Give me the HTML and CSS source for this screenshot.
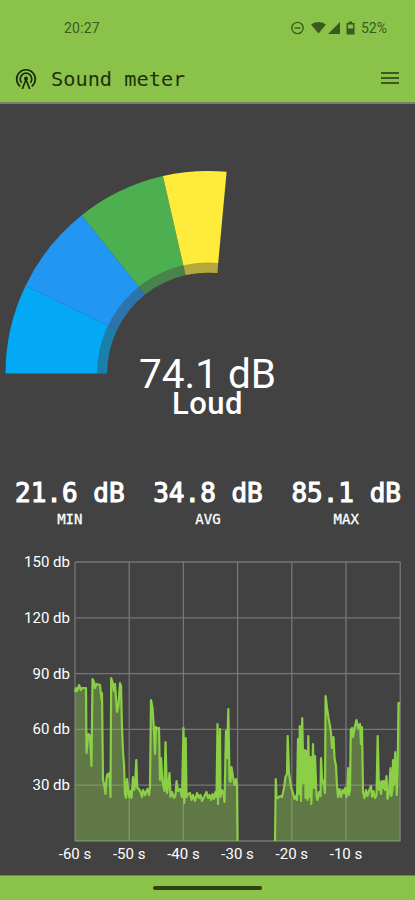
FILE: index.html
```html
<!DOCTYPE html>
<html lang="en">
<head>
  <meta charset="utf-8">
  <title>Sound meter</title>
  <link rel="stylesheet" href="styles.css">
</head>
<body>
  <header>
    <div class="status">
      <span class="time">20:27</span>
      <div class="status-icons">
        <svg width="70" height="16" viewBox="0 0 70 16">
          <circle cx="7.5" cy="8" r="5.7" fill="none" stroke="#3c5a1d" stroke-width="1.3"/>
          <path d="M4.5 8h6" stroke="#3c5a1d" stroke-width="1.4"/>
          <path d="M21 4.400Q28.500-.500 36 4.400L28.500 13.500Z"/>
          <path d="M50 2v12H38Z"/>
          <path d="M58.800 1.500h3.400v1.500h2.300V14.500h-8V3h2.300Z"/>
          <path d="M58 4.600h5V8.500h-5z" fill="#8bc34a"/>
        </svg>
        <span>52%</span>
      </div>
    </div>
    <div class="toolbar">
      <svg class="logo" width="22" height="22" viewBox="0 0 22 22">
        <path d="M5.200 18.300A9.300 9.300 0 1 1 16.800 18.300"/>
        <path d="M6.600 14.800A5.800 5.800 0 1 1 15.400 14.800"/>
        <circle class="dot" cx="11" cy="10.500" r="2"/>
        <path d="M7.300 21L11 11.500L14.700 21"/>
      </svg>
      <h1>Sound meter</h1>
      <svg class="menu" width="18" height="14" viewBox="0 0 18 14">
        <path d="M0 2h18M0 7h18M0 12h18"/>
      </svg>
    </div>
  </header>

  <main>
    <section class="gauge">
      <svg id="gauge" width="415" height="220" viewBox="0 160 415 220"></svg>
      <div class="reading">
        <div class="value">74.1 dB</div>
        <div class="level">Loud</div>
      </div>
    </section>

    <section class="stats">
      <div class="stat"><b>21.6 dB</b><span>MIN</span></div>
      <div class="stat"><b>34.8 dB</b><span>AVG</span></div>
      <div class="stat"><b>85.1 dB</b><span>MAX</span></div>
    </section>

    <svg class="chart" id="chart" width="415" height="325" viewBox="0 550 415 325"></svg>
  </main>

  <footer><div class="pill"></div></footer>

  <script src="script.js"></script>
</body>
</html>
```
FILE: styles.css
```css
body {
  margin: 0;
  height: 900px;
  display: flex;
  flex-direction: column;
  background: #424242;
  color: #fff;
  font-family: Roboto, sans-serif;
  overflow: hidden;
}

header {
  box-sizing: border-box;
  height: 104px;
  background: #8bc34a;
  border-bottom: 2px solid #77806c;
}

.status {
  height: 55px;
  display: flex;
  align-items: center;
  justify-content: space-between;
  padding: 0 28px 0 64px;
  box-sizing: border-box;
  font-size: 14px;
  color: #3c5a1d;
}

.time {
  letter-spacing: 0.2px;
}

.status-icons {
  display: flex;
  align-items: center;
  gap: 1px;
  fill: #3c5a1d;
}

.toolbar {
  height: 47px;
  display: flex;
  align-items: center;
  padding: 0 15px;
}

.logo {
  fill: none;
  stroke: #1b290c;
  stroke-width: 1.7;
}

.logo .dot {
  fill: #1b290c;
  stroke: none;
}

h1 {
  flex: 1;
  margin: 0 0 0 14px;
  font: 400 20.300px "DejaVu Sans Mono", monospace;
  color: #1f300e;
}

.menu {
  margin: 0 1px 2px 0;
  stroke: #3c5a1d;
  stroke-width: 2;
}

main {
  height: 771px;
}

.gauge {
  height: 376px;
  padding-top: 56px;
  box-sizing: border-box;
}

.gauge svg {
  display: block;
}

.reading {
  margin-top: -30px;
  text-align: center;
}

.value {
  font-size: 40.500px;
  line-height: 48px;
}

.level {
  margin-top: -12px;
  font-size: 31px;
  font-weight: 500;
  line-height: 36px;
  letter-spacing: 0.5px;
}

.stats {
  height: 70px;
  display: flex;
  justify-content: space-between;
  padding: 0 14px 0 15px;
}

.stat {
  display: flex;
  flex-direction: column;
  align-items: center;
  font-family: "DejaVu Sans Mono", monospace;
}

.stat b {
  font-size: 26px;
  font-weight: 400;
  line-height: 26px;
  -webkit-text-stroke: 1.100px #fff;
}

.stat span {
  margin-top: 4px;
  font-size: 14px;
  line-height: 18px;
  -webkit-text-stroke: 0.300px #fff;
}

.chart {
  display: block;
}

.chart text {
  font-size: 15px;
  fill: #fff;
}

.grid {
  fill: none;
  stroke: #777;
  stroke-width: 1.3;
}

.area {
  fill: #8bc34a;
  fill-opacity: 0.42;
}

.line {
  fill: none;
  stroke: #8bcf46;
  stroke-width: 2.2;
  stroke-linejoin: round;
}

footer {
  box-sizing: border-box;
  height: 25px;
  background: #8bc34a;
  border-top: 1px solid #77806c;
  padding-top: 10px;
}

.pill {
  width: 109px;
  height: 4px;
  margin: 0 auto;
  border-radius: 2px;
  background: #2a4010;
}
```
FILE: script.js
```js
// Gauge: seven bands of 20 dB over half a circle
const bands = ['#03a9f4', '#2196f3', '#4caf50', '#ffeb3b'];
const level = 74.1;
const cx = 208, cy = 373.5;

function point(r, db) {
  const a = Math.PI * db / 140;
  return (cx - r * Math.cos(a)).toFixed(2) + ' ' + (cy - r * Math.sin(a)).toFixed(2);
}

function ring(r1, r2, from, to, color) {
  return `<path fill="${color}" d="M${point(r2, from)}A${r2} ${r2} 0 0 1 ${point(r2, to)}L${point(r1, to)}A${r1} ${r1} 0 0 0 ${point(r1, from)}Z"/>`;
}

let gauge = '';
bands.forEach((color, i) => {
  gauge += ring(101, 202.5, i * 20, Math.min(level, i * 20 + 20), color);
});
gauge += ring(101, 111, 0, level, 'rgba(66,66,66,0.4)');
document.getElementById('gauge').innerHTML = gauge;

const before = [
  75,692, 76,688, 77,691, 78,689, 79,685, 81,690, 82,688, 86,688,
  86.5,753, 87.5,742, 88.5,734, 90,736, 91.5,766, 92.5,679, 94,682, 95,688,
  96.5,684, 100,685, 101.5,700, 102,693, 103,780, 104,784, 105.5,794, 106.5,778,
  107.5,774, 108.5,776, 109.5,773, 110.5,797, 111.2,678, 113,684, 114,691, 115,684,
  117,712, 118.5,705, 120,683, 121,686, 122,728, 123,752, 124,765, 125,794,
  126,798, 127,779, 128,788, 129,797, 130.5,791, 131.5,798, 133,777, 134,790,
  135,786, 136.3,760, 137.3,788, 139,789, 141,793, 142,797, 143,790, 145,795,
  146.5,791, 147.5,789, 149,795, 150,787, 151,700, 152.5,708, 154,730, 155,754,
  156,727, 157.5,729, 159,728, 160,780, 161,758, 162.5,782, 163.5,786, 164.5,791,
  165.5,742, 167,793, 168.5,783, 169.5,773, 170.5,797, 172,792, 174,798, 175.5,795,
  176.5,781, 178,791, 180,789, 182,797, 183.5,728, 184.3,803, 185.7,738, 186.5,797,
  188,794, 190,793, 191.5,800, 193,795, 195,801, 197,793, 199,798, 200.5,795,
  202,801, 203.5,798, 205,795, 206.5,792, 208,798, 209.5,795, 211,800, 212.5,794,
  214,799, 215.5,792, 216.5,797, 217.5,724, 218,804, 220,729, 220.5,797, 222,790,
  223.5,793, 224.5,802, 226,731, 227,758, 228.3,709, 229.5,780, 230.5,782, 231.5,767,
  233,777, 234.5,785, 236,779, 237,785, 237.5,841
];
const after = [
  275,841, 275.8,779, 276.5,797,
  278,798, 280,796, 282,797, 284,788, 285.5,777, 287,774, 287.7,736, 289,773,
  290,780, 291,787, 293,793, 294.5,799, 296,796, 297,800, 298,739, 299,794,
  299.8,726, 301,801, 302.2,718, 303.5,783, 305,750, 305.5,798, 306.8,751, 307.5,800,
  308.3,736, 309.5,797, 310.5,757, 311.3,804, 312.5,769, 313,744, 314,788, 315,756,
  316.5,796, 317.5,800, 319,792, 320.5,796, 321,758, 322,778, 324,786, 325,793,
  325.6,696, 327,708, 328.5,718, 330,726, 331,733, 332,748, 333.5,737, 334.5,758,
  336,766, 337,787, 338,797, 339.5,789, 341,797, 342.5,790, 344,793, 345,788,
  346.5,797, 347.5,786, 348.3,768, 349,795, 350,790, 350.8,730, 352,728, 353,737,
  354.5,728, 356.5,720, 358,728, 360,724, 361,744, 362,727, 363,792, 364.5,798,
  366,790, 367.5,796, 369,791, 371,786, 372,797, 373.5,791, 375,798, 376.5,795,
  377.7,736, 379,790, 380,782, 381,794, 382,781, 383,788, 384,781, 385,790,
  386.5,776, 387.5,799, 389,793, 390.5,768, 391.3,796, 392.5,790, 393,760, 394,785,
  395.3,752, 396.8,795, 397.8,760, 398.5,703, 400,704
];

let svg = '<path class="grid" d="';
for (let i = 0; i <= 6; i++) svg += `M${75 + i * 54.2} 562V841.500`;
for (let i = 0; i <= 5; i++) svg += `M75 ${562 + i * 55.8}H400.500`;
svg += '"/>';
svg += `<polygon class="area" points="75,841 ${before.join(' ')}"/>`;
svg += `<polygon class="area" points="${after.join(' ')} 400,841"/>`;
svg += `<polyline class="line" points="${before.join(' ')}"/>`;
svg += `<polyline class="line" points="${after.join(' ')}"/>`;

[150, 120, 90, 60, 30].forEach((db, i) => {
  svg += `<text text-anchor="end" x="70" y="${567 + i * 55.8}">${db} db</text>`;
});
[-60, -50, -40, -30, -20, -10].forEach((s, i) => {
  svg += `<text text-anchor="middle" x="${75 + i * 54.2}" y="859">${s} s</text>`;
});
document.getElementById('chart').innerHTML = svg;
```
